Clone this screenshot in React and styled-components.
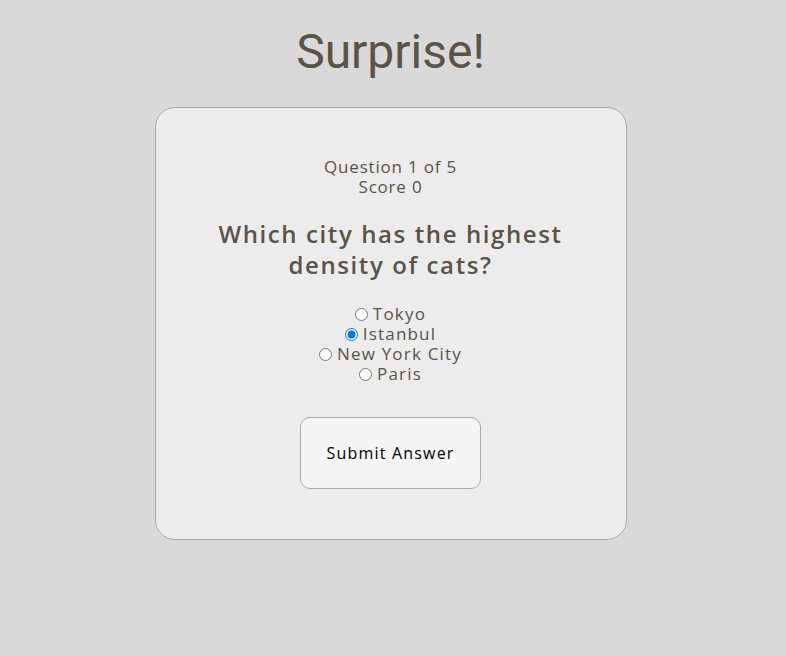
import React, { useState } from "react";
import styled, { createGlobalStyle } from "styled-components";

const Global = createGlobalStyle`
  html, body { margin: 0; padding: 0; background: #d9d9d9; }
  body { font-family: "Open Sans", "DejaVu Sans", sans-serif; color: #595447; }
`;

const Page = styled.div`
  display: flex;
  flex-direction: column;
  align-items: center;
  padding: 22px 5px 0 0;
`;

const Title = styled.h1`
  margin: 0 0 25px;
  font-family: "Roboto", "Liberation Sans", sans-serif;
  font-weight: 400;
  font-size: 48px;
  line-height: 60px;
  color: #595447;
`;

const Card = styled.div`
  box-sizing: border-box;
  width: 472px;
  height: 433px;
  background: #ececec;
  border: 1px solid #aaaaaa;
  border-radius: 20px;
  display: flex;
  flex-direction: column;
  align-items: center;
  padding-top: 49px;
`;

const Meta = styled.div`
  font-size: 17px;
  line-height: 20px;
  letter-spacing: 0.8px;
  text-align: center;
`;

const Question = styled.h2`
  margin: 21px 0 24px;
  font-size: 24px;
  font-weight: 600;
  line-height: 31px;
  letter-spacing: 1.6px;
  text-align: center;
  width: 400px;
`;

const Options = styled.div`
  display: flex;
  flex-direction: column;
  align-items: center;
`;

const Option = styled.label`
  font-size: 17px;
  line-height: 20px;
  letter-spacing: 1.2px;
  display: flex;
  align-items: center;
  input { margin: 0 5px 0 0; width: 13px; height: 13px; }
`;

const Submit = styled.button`
  margin-top: 33px;
  width: 181px;
  height: 72px;
  background: #f5f5f5;
  border: 1px solid #aaaaaa;
  border-radius: 10px;
  font-family: inherit;
  font-size: 16px;
  letter-spacing: 1.2px;
  color: #000;
`;

const options = ["Tokyo", "Istanbul", "New York City", "Paris"];

export default function App() {
  const [sel, setSel] = useState("Istanbul");
  return (
    <>
      <Global />
      <Page>
        <Title>Surprise!</Title>
        <Card>
          <Meta>Question 1 of 5<br />Score 0</Meta>
          <Question>Which city has the highest density of cats?</Question>
          <Options>
            {options.map((o) => (
              <Option key={o}>
                <input type="radio" name="q" checked={sel === o} onChange={() => setSel(o)} />
                {o}
              </Option>
            ))}
          </Options>
          <Submit>Submit Answer</Submit>
        </Card>
      </Page>
    </>
  );
}
